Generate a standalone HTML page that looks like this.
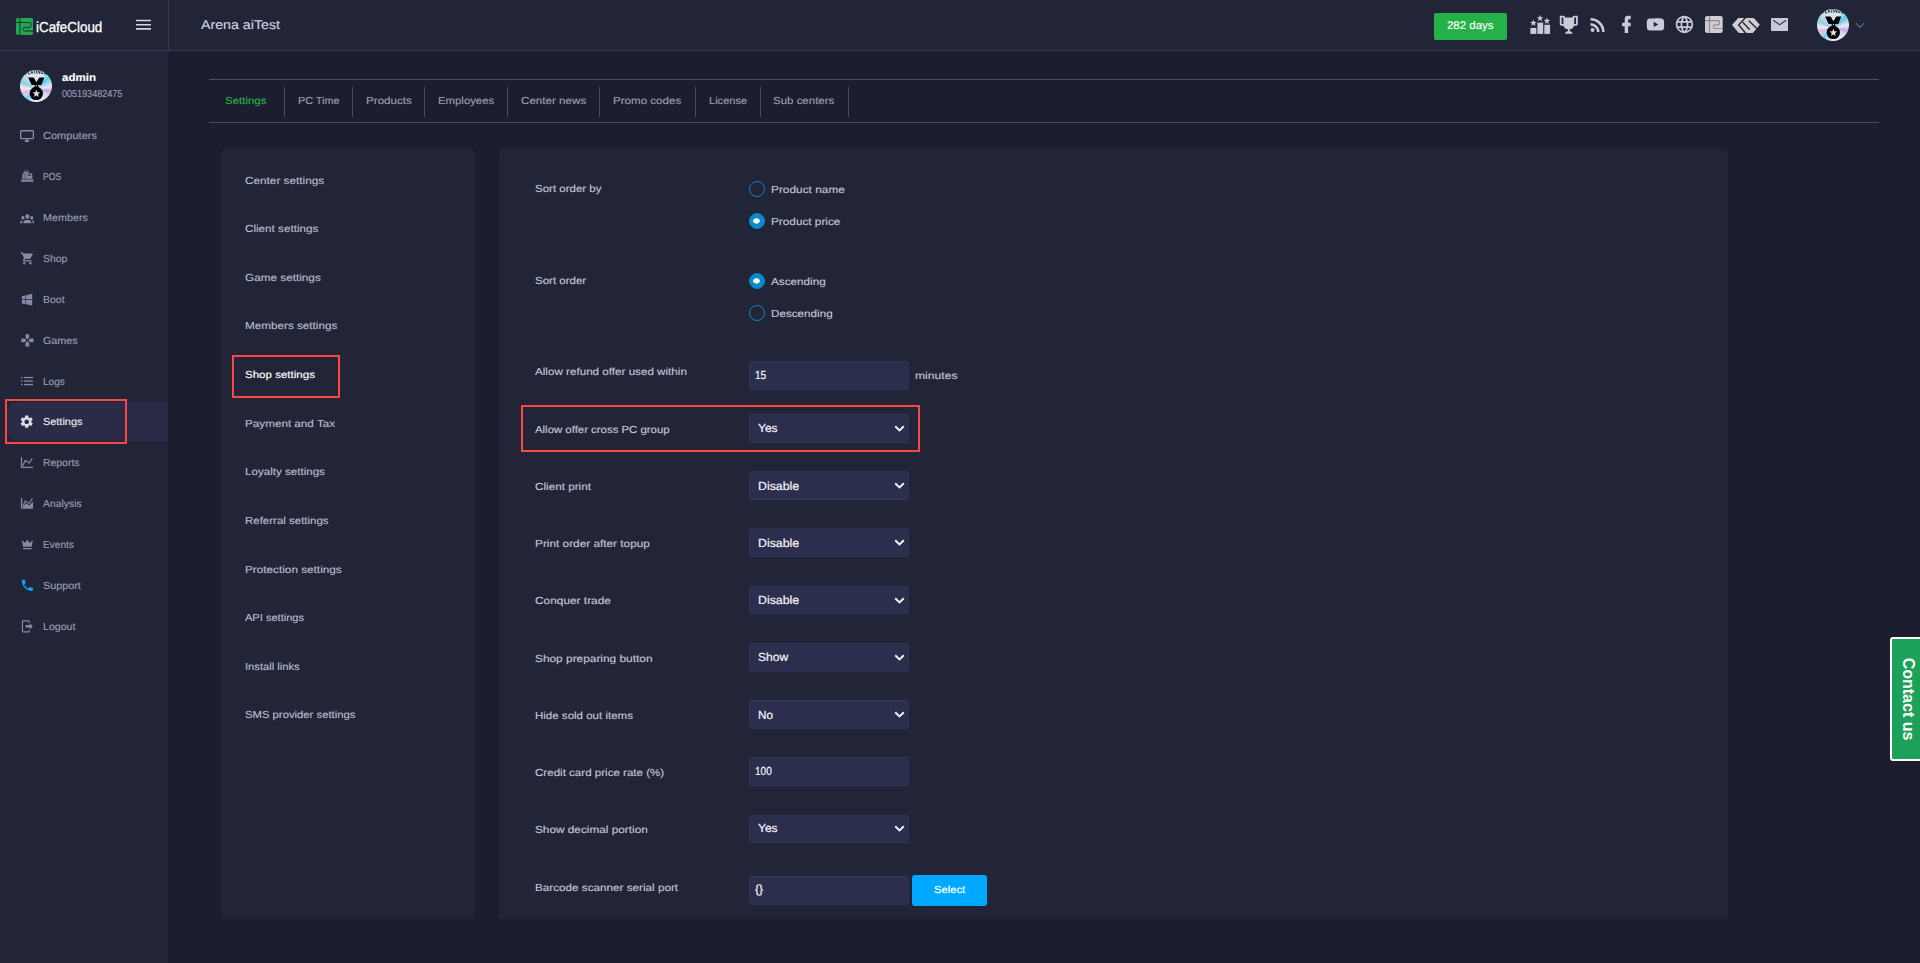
<!DOCTYPE html>
<html lang="en">
<head>
<meta charset="utf-8">
<title>iCafeCloud - Shop settings</title>
<style>
html,body{margin:0;padding:0}
body{width:1920px;height:963px;overflow:hidden;background:#1c1d2f;font-family:"Liberation Sans",Arial,sans-serif;position:relative}
*{box-sizing:border-box}
ul{list-style:none;margin:0;padding:0}
a{text-decoration:none;color:inherit}
.abs{position:absolute}
.t{position:absolute;display:inline-block;line-height:20px;white-space:pre;transform-origin:0 50%;text-rendering:geometricPrecision}
header{position:absolute;left:0;top:0;width:1920px;height:51px;background:#222437;border-bottom:1px solid #383a5c}
aside{position:absolute;left:0;top:51px;width:168px;height:912px;background:#222437}
.vline{position:absolute;left:168px;top:0;width:1px;height:50px;background:#383a5c}
.card{position:absolute;background:#222437;border-radius:5px}
.hl{position:absolute;border:2px solid #fb4643}
.tline{position:absolute;left:209px;width:1670px;height:1px;background:#4a4c66}
.sep{position:absolute;top:87px;width:1px;height:30px;background:#4a4c66}
.ctl{position:absolute;left:749px;width:160px;height:28.7px;background:#2c2e4e;border:1px solid #313357;border-radius:2.5px;color:#f4f4f8;font-size:11.7px;-webkit-text-stroke:0.2px #f4f4f8}
.fi{position:absolute;top:-0.5px;width:130px;height:28.7px;line-height:28.7px;margin:0;padding:0;border:0;outline:0;background:transparent;-webkit-appearance:none;appearance:none;color:inherit;font:inherit;-webkit-text-stroke:inherit;white-space:pre;display:block;transform-origin:0 50%;text-rendering:geometricPrecision}
.ctl svg{position:absolute;right:3.4px;top:10.1px}
.radio{position:absolute;left:749px;width:16px;height:16px;margin:0;padding:0;-webkit-appearance:none;appearance:none;outline:0;border-radius:50%;border:1px solid #0a89cd;background:transparent}
.radio:checked{background:#0a89cd radial-gradient(ellipse 3.75px 3.0px at 6.45px 6.95px,#fff 0,#fff 78%,rgba(255,255,255,0) 100%)}
.btn{position:absolute;border-radius:2px;border:0;padding:0;margin:0;font:inherit;text-align:left;display:block}
.contact{position:absolute;left:1890px;top:637px;width:34px;height:124px;background:#1da158;border:2px solid #fff;border-radius:3px}
.contact span{position:absolute;left:-46px;top:50.2px;width:124px;text-align:center;font-weight:700;font-size:16px;line-height:20px;color:#fff;transform:rotate(90deg);white-space:pre}
.lg{-webkit-text-stroke:0.3px #fff}
</style>
</head>
<body>

<header>
<div class="vline"></div>
<svg class="abs" style="left:16px;top:18px" width="17.2" height="17" viewBox="0 0 17.2 17">
<rect width="17.2" height="17" rx="2" fill="#22a652"/>
<path d="M3.9 0V17M0 4.5H13.3Q15.2 4.5 15.2 6.3V7.6Q15.2 9.4 13.3 9.4H8.6Q7.2 9.4 7.2 10.7V11.7Q7.2 13 8.6 13H17.2" fill="none" stroke="#1c3038" stroke-width="1"/>
</svg><svg class="abs" style="left:136.2px;top:19px" width="15" height="11" viewBox="0 0 15 11"><path fill="#d4d5e2" d="M0 0.7H15V2.25H0ZM0 4.9H15V6.45H0ZM0 9.1H15V10.65H0Z"/></svg>
<span class="t" style="left:35.6px;top:17.80px;font-size:14.5px;color:#ffffff;transform:scaleX(0.9240);-webkit-text-stroke:0.3px #ffffff;">iCafeCloud</span>
<span class="t" style="left:201px;top:14.80px;font-size:12.8px;color:#d0d2e1;transform:scaleX(1.1105);-webkit-text-stroke:0.15px #d0d2e1;">Arena aiTest</span>
<div class="btn" style="left:1434px;top:13px;width:73px;height:27px;background:#23b148"></div>
<span class="t" style="left:1447px;top:15.50px;font-size:11px;color:#ffffff;transform:scaleX(1.0413);-webkit-text-stroke:0.15px #ffffff;">282 days</span>
<svg class="abs" style="left:1529.6px;top:15.1px" width="21" height="19" viewBox="0 0 21 19"><g fill="#c9cbdb"><rect x="0.4" y="12.9" width="6" height="6"/><rect x="7.4" y="7.6" width="5.8" height="11.3"/><rect x="14.3" y="9.8" width="5.8" height="9.1"/><polygon points="3.40,4.40 4.25,6.83 6.82,6.89 4.78,8.45 5.52,10.91 3.40,9.45 1.28,10.91 2.02,8.45 -0.02,6.89 2.55,6.83"/><polygon points="10.10,-0.30 10.95,2.13 13.52,2.19 11.48,3.75 12.22,6.21 10.10,4.75 7.98,6.21 8.72,3.75 6.68,2.19 9.25,2.13"/><polygon points="16.90,2.40 17.75,4.83 20.32,4.89 18.28,6.45 19.02,8.91 16.90,7.45 14.78,8.91 15.52,6.45 13.48,4.89 16.05,4.83"/></g></svg><svg class="abs" style="left:1558.20px;top:14.00px" width="21.6" height="21.6" viewBox="0 0 24 24"><path fill="#c9cbdb" d="M20.2,2H19.5H18C17.1,2 16,3 16,4H8C8,3 6.9,2 6,2H4.5H3.8H2V11C2,12 3,13 4,13H6.2C6.6,15 7.9,16.7 11,17V19.1C8.8,19.3 8,20.4 8,21.7V22H16V21.7C16,20.4 15.2,19.3 13,19.1V17C16.1,16.7 17.4,15 17.8,13H20C21,13 22,12 22,11V2H20.2M4,11V4H6V6V11C5.1,11 4.3,11 4,11M20,11C19.7,11 18.9,11 18,11V6V4H20V11Z"/></svg><svg class="abs" style="left:1586.90px;top:14.00px" width="21.6" height="21.6" viewBox="0 0 24 24"><path fill="#c9cbdb" d="M6.18,15.64A2.18,2.18 0 0,1 8.36,17.82C8.36,19 7.38,20 6.18,20C5,20 4,19 4,17.82A2.18,2.18 0 0,1 6.18,15.64M4,4.44A15.56,15.56 0 0,1 19.56,20H16.73A12.73,12.73 0 0,0 4,7.27V4.44M4,10.1A9.9,9.9 0 0,1 13.9,20H11.07A7.07,7.07 0 0,0 4,12.93V10.1Z"/></svg><svg class="abs" style="left:1616.10px;top:14.00px" width="20.8" height="20.8" viewBox="0 0 24 24"><path fill="#c9cbdb" d="M17,2V2H17V6H15C14.31,6 14,6.81 14,7.5V10H14L17,10V14H14V22H10V14H7V10H10V6A4,4 0 0,1 14,2H17Z"/></svg><svg class="abs" style="left:1645.05px;top:14.05px" width="20.9" height="20.9" viewBox="0 0 24 24"><path fill="#c9cbdb" d="M10,15L15.19,12L10,9V15M21.56,7.17C21.69,7.64 21.78,8.27 21.84,9.07C21.91,9.87 21.94,10.56 21.94,11.16L22,12C22,14.19 21.84,15.8 21.56,16.83C21.31,17.73 20.73,18.31 19.83,18.56C19.36,18.69 18.5,18.78 17.18,18.84C15.88,18.91 14.69,18.94 13.59,18.94L12,19C7.81,19 5.2,18.84 4.17,18.56C3.27,18.31 2.69,17.73 2.44,16.83C2.31,16.36 2.22,15.73 2.16,14.93C2.09,14.13 2.06,13.44 2.06,12.84L2,12C2,9.81 2.16,8.2 2.44,7.17C2.69,6.27 3.27,5.69 4.17,5.44C4.64,5.31 5.5,5.22 6.82,5.16C8.12,5.09 9.31,5.06 10.41,5.06L12,5C16.19,5 18.8,5.16 19.83,5.44C20.73,5.69 21.31,6.27 21.56,7.17Z"/></svg><svg class="abs" style="left:1674.05px;top:14.10px" width="20.9" height="20.9" viewBox="0 0 24 24"><path fill="#c9cbdb" d="M16.36,14C16.44,13.34 16.5,12.68 16.5,12C16.5,11.32 16.44,10.66 16.36,10H19.74C19.9,10.64 20,11.31 20,12C20,12.69 19.9,13.36 19.74,14M14.59,19.56C15.19,18.45 15.65,17.25 15.97,16H18.92C17.96,17.65 16.43,18.93 14.59,19.56M14.34,14H9.66C9.56,13.34 9.5,12.68 9.5,12C9.5,11.32 9.56,10.65 9.66,10H14.34C14.43,10.65 14.5,11.32 14.5,12C14.5,12.68 14.43,13.34 14.34,14M12,19.96C11.17,18.76 10.5,17.43 10.09,16H13.91C13.5,17.43 12.83,18.76 12,19.96M8,8H5.08C6.03,6.34 7.57,5.06 9.4,4.44C8.8,5.55 8.35,6.75 8,8M5.08,16H8C8.35,17.25 8.8,18.45 9.4,19.56C7.57,18.93 6.03,17.65 5.08,16M4.26,14C4.1,13.36 4,12.69 4,12C4,11.31 4.1,10.64 4.26,10H7.64C7.56,10.66 7.5,11.32 7.5,12C7.5,12.68 7.56,13.34 7.64,14M12,4.03C12.83,5.23 13.5,6.57 13.91,8H10.09C10.5,6.57 11.17,5.23 12,4.03M18.92,8H15.97C15.65,6.75 15.19,5.55 14.59,4.44C16.43,5.07 17.96,6.34 18.92,8M12,2C6.47,2 2,6.5 2,12A10,10 0 0,0 12,22A10,10 0 0,0 22,12A10,10 0 0,0 12,2Z"/></svg><svg class="abs" style="left:1705.3px;top:16.2px" width="17.7" height="17" viewBox="0 0 17.7 17">
<rect width="17.7" height="17" rx="2.2" fill="#cfcfd1"/>
<path d="M4.5 0V17M0 4.6H13.2Q14.5 4.6 14.5 5.9V7.5Q14.5 8.8 13.2 8.8H9.8Q8.4 8.8 8.4 10.1V11.2Q8.4 12.5 9.8 12.5H17.7" fill="none" stroke="#8a8c9d" stroke-width="1.2"/></svg><svg class="abs" style="left:1732.2px;top:18px" width="27.8" height="15" viewBox="0 0 27.8 15">
<path fill="#cfcfd1" d="M6.2 0H21.8L27.8 6.8L20.8 15H6.8L0 7Z"/>
<path d="M13.4 -0.3L6.6 7L13.8 15.3M10.8 4.3L17.8 11.7M16.8 2.7L24.8 10.6" fill="none" stroke="#23253a" stroke-width="1.35"/></svg><svg class="abs" style="left:1770.8px;top:17.8px" width="17.4" height="13.5" viewBox="0 0 17.4 13.5"><rect width="17.4" height="13.5" rx="1.3" fill="#c9cbdb"/><path d="M2.2 2.3L8.7 6.7L15.2 2.3" fill="none" stroke="#2a2c44" stroke-width="1.1"/></svg><div class="abs" style="left:1816.9px;top:8.9px;width:32.2px;height:32.2px;border-radius:50%;background:conic-gradient(from 0deg at 50% 60%,#d6e3ef 0deg,#dde9f2 25deg,#5cc9ea 48deg,#a8d8ec 62deg,#f3e6ee 80deg,#c9a6ef 97deg,#d5dcef 118deg,#e3ecf4 150deg,#eef2f7 180deg,#b5e3f1 208deg,#5fd5ee 224deg,#c3d3ea 240deg,#ddbbe9 256deg,#f6ebee 276deg,#8fcfe2 296deg,#b9dcea 318deg,#dbe6f0 340deg,#d6e3ef 360deg)"></div>
<svg class="abs" style="left:1816.9px;top:8.9px;will-change:transform" width="32.2" height="32.2" viewBox="0 0 32.2 32.2">
<defs><clipPath id="c1"><circle cx="16.1" cy="16.1" r="16.1"/></clipPath>
<path id="a1" d="M4 5.5 A40 40 0 0 1 28.4 5.5"/></defs>
<g clip-path="url(#c1)">
<text font-family="Liberation Sans,Arial,sans-serif" font-size="4.7" font-weight="700" fill="#000"><textPath href="#a1" startOffset="1.3" textLength="21.8" lengthAdjust="spacingAndGlyphs">PLATINUM</textPath></text>
<path fill="#000" d="M8.1 7.5H13.7L16.4 12.25L19.3 7.5H24.3L21.4 14.95H18.2V17.6H14.6V14.95H11.6Z"/>
<rect x="15.8" y="15.1" width="1.2" height="1.2" fill="#cfd6e6"/>
<circle cx="16.3" cy="23.4" r="6.7" fill="#000"/>
<polygon fill="#dcdce8" points="16.40,19.70 17.46,22.24 20.20,22.46 18.11,24.26 18.75,26.94 16.40,25.50 14.05,26.94 14.69,24.26 12.60,22.46 15.34,22.24"/>
</g></svg><svg class="abs" style="left:1854.5px;top:22px" width="10" height="7" viewBox="0 0 10 7"><path d="M0.8 1L5 5.4L9.2 1" fill="none" stroke="#6470a6" stroke-width="1.05"/></svg>
</header>
<aside></aside>
<nav>
<div class="abs" style="left:19.9px;top:69.9px;width:32.2px;height:32.2px;border-radius:50%;background:conic-gradient(from 0deg at 50% 60%,#d6e3ef 0deg,#dde9f2 25deg,#5cc9ea 48deg,#a8d8ec 62deg,#f3e6ee 80deg,#c9a6ef 97deg,#d5dcef 118deg,#e3ecf4 150deg,#eef2f7 180deg,#b5e3f1 208deg,#5fd5ee 224deg,#c3d3ea 240deg,#ddbbe9 256deg,#f6ebee 276deg,#8fcfe2 296deg,#b9dcea 318deg,#dbe6f0 340deg,#d6e3ef 360deg)"></div>
<svg class="abs" style="left:19.9px;top:69.9px;will-change:transform" width="32.2" height="32.2" viewBox="0 0 32.2 32.2">
<defs><clipPath id="c2"><circle cx="16.1" cy="16.1" r="16.1"/></clipPath>
<path id="a2" d="M4 5.5 A40 40 0 0 1 28.4 5.5"/></defs>
<g clip-path="url(#c2)">
<text font-family="Liberation Sans,Arial,sans-serif" font-size="4.7" font-weight="700" fill="#000"><textPath href="#a2" startOffset="1.3" textLength="21.8" lengthAdjust="spacingAndGlyphs">PLATINUM</textPath></text>
<path fill="#000" d="M8.1 7.5H13.7L16.4 12.25L19.3 7.5H24.3L21.4 14.95H18.2V17.6H14.6V14.95H11.6Z"/>
<rect x="15.8" y="15.1" width="1.2" height="1.2" fill="#cfd6e6"/>
<circle cx="16.3" cy="23.4" r="6.7" fill="#000"/>
<polygon fill="#dcdce8" points="16.40,19.70 17.46,22.24 20.20,22.46 18.11,24.26 18.75,26.94 16.40,25.50 14.05,26.94 14.69,24.26 12.60,22.46 15.34,22.24"/>
</g></svg>
<span class="t" style="left:61.5px;top:67.70px;font-size:10.8px;font-weight:700;color:#ffffff;transform:scaleX(1.0693);-webkit-text-stroke:0.15px #ffffff;">admin</span>
<span class="t" style="left:61.7px;top:85.20px;font-size:10.2px;color:#999cb6;transform:scaleX(0.8868);-webkit-text-stroke:0.15px #999cb6;">005193482475</span>
<div class="abs" style="left:6px;top:402px;width:162px;height:39px;background:#292b47;border-radius:13px 0 0 13px"></div>
<ul>
<li><a href="#"><svg class="abs" style="left:19.00px;top:129.00px" width="16" height="14" viewBox="0 0 16 14"><rect x="1.65" y="1.75" width="12.7" height="7.9" rx="0.7" fill="none" stroke="#878aa7" stroke-width="1.3"/><path d="M7.3 10.2H8.7L10.6 13H5.4Z" fill="#878aa7"/></svg><span class="t" style="left:42.5px;top:127.30px;font-size:10.2px;color:#999cb6;transform:scaleX(1.0837);-webkit-text-stroke:0.15px #999cb6;">Computers</span></a></li>
<li><a href="#"><svg class="abs" style="left:19.65px;top:168.73px" width="14.7" height="14.7" viewBox="0 0 24 24"><path fill="#878aa7" d="M2,17H22V21H2V17M6.25,7H9V6H6V3H14V6H11V7H17.8C18.8,7 19.8,8 20,9L20.5,16H3.5L4.05,9C4.05,8 5.05,7 6.25,7M13,9V11H18V9H13M6,9V10H8V9H6M9,9V10H11V9H9M6,11V12H8V11H6M9,11V12H11V11H9M6,13V14H8V13H6M9,13V14H11V13H9M7,4V5H13V4H7Z"/></svg><span class="t" style="left:42.5px;top:168.18px;font-size:10.2px;color:#999cb6;transform:scaleX(0.8552);-webkit-text-stroke:0.15px #999cb6;">POS</span></a></li>
<li><a href="#"><svg class="abs" style="left:19.65px;top:210.81px" width="14.7" height="14.7" viewBox="0 0 24 24"><path fill="#878aa7" d="M12,5.5A3.5,3.5 0 0,1 15.5,9A3.5,3.5 0 0,1 12,12.5A3.5,3.5 0 0,1 8.5,9A3.5,3.5 0 0,1 12,5.5M5,8C5.56,8 6.08,8.15 6.53,8.42C6.38,9.85 6.8,11.27 7.66,12.38C7.16,13.34 6.16,14 5,14A3,3 0 0,1 2,11A3,3 0 0,1 5,8M19,8A3,3 0 0,1 22,11A3,3 0 0,1 19,14C17.84,14 16.84,13.34 16.34,12.38C17.2,11.27 17.62,9.85 17.47,8.42C17.92,8.15 18.44,8 19,8M5.5,18.25C5.5,16.18 8.41,14.5 12,14.5C15.59,14.5 18.5,16.18 18.5,18.25V20H5.5V18.25M0,20V18.5C0,17.11 1.89,15.94 4.45,15.6C3.86,16.28 3.5,17.22 3.5,18.25V20H0M24,20H20.5V18.25C20.5,17.22 20.14,16.28 19.55,15.6C22.11,15.94 24,17.11 24,18.5V20Z"/></svg><span class="t" style="left:42.5px;top:209.06px;font-size:10.2px;color:#999cb6;transform:scaleX(1.0572);-webkit-text-stroke:0.15px #999cb6;">Members</span></a></li>
<li><a href="#"><svg class="abs" style="left:19.65px;top:251.29px" width="14.7" height="14.7" viewBox="0 0 24 24"><path fill="#878aa7" d="M17,18C15.89,18 15,18.89 15,20A2,2 0 0,0 17,22A2,2 0 0,0 19,20C19,18.89 18.1,18 17,18M1,2V4H3L6.6,11.59L5.24,14.04C5.09,14.32 5,14.65 5,15A2,2 0 0,0 7,17H19V15H7.42A0.25,0.25 0 0,1 7.17,14.75C7.17,14.7 7.18,14.66 7.2,14.63L8.1,13H15.55C16.3,13 16.96,12.58 17.3,11.97L20.88,5.5C20.95,5.34 21,5.17 21,5A1,1 0 0,0 20,4H5.21L4.27,2M7,18C5.89,18 5,18.89 5,20A2,2 0 0,0 7,22A2,2 0 0,0 9,20C9,18.89 8.1,18 7,18Z"/></svg><span class="t" style="left:42.5px;top:249.94px;font-size:10.2px;color:#999cb6;transform:scaleX(1.0253);-webkit-text-stroke:0.15px #999cb6;">Shop</span></a></li>
<li><a href="#"><svg class="abs" style="left:19.65px;top:292.17px" width="14.7" height="14.7" viewBox="0 0 24 24"><path fill="#878aa7" d="M3,12V6.75L9,5.43V11.91L3,12M20,3V11.75L10,11.9V5.21L20,3M3,13L9,13.09V19.9L3,18.75V13M20,13.25V22L10,20.09V13.1L20,13.25Z"/></svg><span class="t" style="left:42.5px;top:290.82px;font-size:10.2px;color:#999cb6;transform:scaleX(1.0301);-webkit-text-stroke:0.15px #999cb6;">Boot</span></a></li>
<li><a href="#"><svg class="abs" style="left:19.65px;top:333.05px" width="14.7" height="14.7" viewBox="0 0 24 24"><path fill="#878aa7" d="M15 7.5V2H9v5.5l3 3 3-3zM7.5 9H2v6h5.5l3-3-3-3zM9 16.5V22h6v-5.5l-3-3-3 3zM16.5 9l-3 3 3 3H22V9h-5.5z"/></svg><span class="t" style="left:42.5px;top:331.70px;font-size:10.2px;color:#999cb6;transform:scaleX(1.0565);-webkit-text-stroke:0.15px #999cb6;">Games</span></a></li>
<li><a href="#"><svg class="abs" style="left:20.00px;top:375.88px" width="14" height="10" viewBox="0 0 14 10"><g fill="#878aa7"><rect x="1" y="0.9" width="1.6" height="1.3"/><rect x="4" y="0.9" width="9" height="1.3"/><rect x="1" y="4.4" width="1.6" height="1.3"/><rect x="4" y="4.4" width="9" height="1.3"/><rect x="1" y="7.9" width="1.6" height="1.3"/><rect x="4" y="7.9" width="9" height="1.3"/></g></svg><span class="t" style="left:42.5px;top:372.58px;font-size:10.2px;color:#999cb6;transform:scaleX(0.9912);-webkit-text-stroke:0.15px #999cb6;">Logs</span></a></li>
<li><a href="#"><svg class="abs" style="left:19.30px;top:414.26px" width="15.4" height="15.4" viewBox="0 0 24 24"><path fill="#dcdde8" d="M19.14,12.94c0.04-0.3,0.06-0.61,0.06-0.94c0-0.32-0.02-0.64-0.07-0.94l2.03-1.58c0.18-0.14,0.23-0.41,0.12-0.61 l-1.92-3.32c-0.12-0.22-0.37-0.29-0.59-0.22l-2.39,0.96c-0.5-0.38-1.03-0.7-1.62-0.94L14.4,2.81c-0.04-0.24-0.24-0.41-0.48-0.41 h-3.84c-0.24,0-0.43,0.17-0.47,0.41L9.25,5.35C8.66,5.59,8.12,5.92,7.63,6.29L5.24,5.33c-0.22-0.08-0.47,0-0.59,0.22L2.74,8.87 C2.62,9.08,2.66,9.34,2.86,9.48l2.03,1.58C4.84,11.36,4.8,11.69,4.8,12s0.02,0.64,0.07,0.94l-2.03,1.58 c-0.18,0.14-0.23,0.41-0.12,0.61l1.92,3.32c0.12,0.22,0.37,0.29,0.59,0.22l2.39-0.96c0.5,0.38,1.03,0.7,1.62,0.94l0.36,2.54 c0.05,0.24,0.24,0.41,0.48,0.41h3.84c0.24,0,0.44-0.17,0.47-0.41l0.36-2.54c0.59-0.24,1.13-0.56,1.62-0.94l2.39,0.96 c0.22,0.08,0.47,0,0.59-0.22l1.92-3.32c0.12-0.22,0.07-0.47-0.12-0.61L19.14,12.94z M12,15.6c-1.98,0-3.6-1.62-3.6-3.6 s1.62-3.6,3.6-3.6s3.6,1.62,3.6,3.6S13.98,15.6,12,15.6z"/></svg><span class="t" style="left:42.5px;top:413.46px;font-size:10.2px;color:#e9eaf2;transform:scaleX(1.0703);-webkit-text-stroke:0.15px #e9eaf2;">Settings</span></a></li>
<li><a href="#"><svg class="abs" style="left:20.00px;top:456.04px" width="14" height="14" viewBox="0 0 14 14"><path d="M1.5 1V11.4H13" fill="none" stroke="#878aa7" stroke-width="1.25"/><path d="M2.6 10.2L5.2 4.4L9.2 6.9L12.4 2.2" fill="none" stroke="#878aa7" stroke-width="1.15"/></svg><span class="t" style="left:42.5px;top:454.34px;font-size:10.2px;color:#999cb6;transform:scaleX(1.0232);-webkit-text-stroke:0.15px #999cb6;">Reports</span></a></li>
<li><a href="#"><svg class="abs" style="left:20.00px;top:496.92px" width="14" height="14" viewBox="0 0 14 14"><path d="M0.9 1H2.2V11.8H0.9Z" fill="#878aa7"/><path d="M2.6 9.9L5.2 4.0L9.2 6.5L12.4 1.5" fill="none" stroke="#878aa7" stroke-width="1.15"/><path d="M2.2 11.8L5.6 6.2L9.4 8.5L13 4.4V11.8Z" fill="#878aa7"/></svg><span class="t" style="left:42.5px;top:495.22px;font-size:10.2px;color:#999cb6;transform:scaleX(1.0201);-webkit-text-stroke:0.15px #999cb6;">Analysis</span></a></li>
<li><a href="#"><svg class="abs" style="left:19.65px;top:537.45px" width="14.7" height="14.7" viewBox="0 0 24 24"><path fill="#878aa7" d="M5 16L3 5L8.5 10L12 4L15.5 10L21 5L19 16H5M19 19C19 19.6 18.6 20 18 20H6C5.4 20 5 19.6 5 19V18H19V19Z"/></svg><span class="t" style="left:42.5px;top:536.10px;font-size:10.2px;color:#999cb6;transform:scaleX(0.9918);-webkit-text-stroke:0.15px #999cb6;">Events</span></a></li>
<li><a href="#"><svg class="abs" style="left:19.65px;top:578.33px" width="14.7" height="14.7" viewBox="0 0 24 24"><path fill="#00aaff" d="M6.62 10.79c1.44 2.83 3.76 5.14 6.59 6.59l2.2-2.2c.27-.27.67-.36 1.02-.24 1.12.37 2.33.57 3.57.57.55 0 1 .45 1 1V20c0 .55-.45 1-1 1-9.39 0-17-7.61-17-17 0-.55.45-1 1-1h3.5c.55 0 1 .45 1 1 0 1.25.2 2.45.57 3.57.11.35.03.74-.25 1.02l-2.2 2.2z"/></svg><span class="t" style="left:42.5px;top:576.98px;font-size:10.2px;color:#999cb6;transform:scaleX(1.0592);-webkit-text-stroke:0.15px #999cb6;">Support</span></a></li>
<li><a href="#"><svg class="abs" style="left:19.65px;top:619.21px" width="14.7" height="14.7" viewBox="0 0 24 24"><path fill="#878aa7" d="M16,17V14H9V10H16V7L21,12L16,17M14,2A2,2 0 0,1 16,4V6H14V4H5V20H14V18H16V20A2,2 0 0,1 14,22H5A2,2 0 0,1 3,20V4A2,2 0 0,1 5,2H14Z"/></svg><span class="t" style="left:42.5px;top:617.86px;font-size:10.2px;color:#999cb6;transform:scaleX(1.0394);-webkit-text-stroke:0.15px #999cb6;">Logout</span></a></li>
</ul>
<div class="hl" style="left:5px;top:399px;width:122px;height:45px"></div>
</nav>
<main>
<div class="tline" style="top:79px"></div><div class="tline" style="top:122px"></div>
<ul>
<li><a href="#"><span class="t" style="left:225px;top:92.35px;font-size:10.2px;color:#23b148;transform:scaleX(1.1246);-webkit-text-stroke:0.15px #23b148;">Settings</span></a></li>
<li><a href="#"><span class="t" style="left:297.5px;top:92.35px;font-size:10.2px;color:#9a9cb4;transform:scaleX(1.0624);-webkit-text-stroke:0.15px #9a9cb4;">PC Time</span></a></li>
<li><a href="#"><span class="t" style="left:365.6px;top:92.35px;font-size:10.2px;color:#9a9cb4;transform:scaleX(1.1417);-webkit-text-stroke:0.15px #9a9cb4;">Products</span></a></li>
<li><a href="#"><span class="t" style="left:438.3px;top:92.35px;font-size:10.2px;color:#9a9cb4;transform:scaleX(1.1149);-webkit-text-stroke:0.15px #9a9cb4;">Employees</span></a></li>
<li><a href="#"><span class="t" style="left:521.4px;top:92.35px;font-size:10.2px;color:#9a9cb4;transform:scaleX(1.1398);-webkit-text-stroke:0.15px #9a9cb4;">Center news</span></a></li>
<li><a href="#"><span class="t" style="left:613.3px;top:92.35px;font-size:10.2px;color:#9a9cb4;transform:scaleX(1.1361);-webkit-text-stroke:0.15px #9a9cb4;">Promo codes</span></a></li>
<li><a href="#"><span class="t" style="left:708.5px;top:92.35px;font-size:10.2px;color:#9a9cb4;transform:scaleX(1.0847);-webkit-text-stroke:0.15px #9a9cb4;">License</span></a></li>
<li><a href="#"><span class="t" style="left:773.4px;top:92.35px;font-size:10.2px;color:#9a9cb4;transform:scaleX(1.1274);-webkit-text-stroke:0.15px #9a9cb4;">Sub centers</span></a></li>
</ul>
<div class="sep" style="left:284.1px"></div>
<div class="sep" style="left:351.9px"></div>
<div class="sep" style="left:423.9px"></div>
<div class="sep" style="left:507.0px"></div>
<div class="sep" style="left:599.1px"></div>
<div class="sep" style="left:694.9px"></div>
<div class="sep" style="left:759.9px"></div>
<div class="sep" style="left:847.9px"></div>
<div class="card" style="left:221px;top:149px;width:254px;height:770px"></div>
<div class="card" style="left:499px;top:149px;width:1229px;height:770px;border-radius:5px 5px 0 0"></div>
<ul>
<li><a href="#"><span class="t" style="left:244.8px;top:171.55px;font-size:10.2px;color:#b9bbcd;transform:scaleX(1.1557);-webkit-text-stroke:0.15px #b9bbcd;">Center settings</span></a></li>
<li><a href="#"><span class="t" style="left:244.8px;top:220.18px;font-size:10.2px;color:#b9bbcd;transform:scaleX(1.1453);-webkit-text-stroke:0.15px #b9bbcd;">Client settings</span></a></li>
<li><a href="#"><span class="t" style="left:244.8px;top:268.81px;font-size:10.2px;color:#b9bbcd;transform:scaleX(1.1539);-webkit-text-stroke:0.15px #b9bbcd;">Game settings</span></a></li>
<li><a href="#"><span class="t" style="left:244.8px;top:317.44px;font-size:10.2px;color:#b9bbcd;transform:scaleX(1.1479);-webkit-text-stroke:0.15px #b9bbcd;">Members settings</span></a></li>
<li><a href="#"><span class="t" style="left:244.8px;top:366.07px;font-size:10.2px;color:#ffffff;transform:scaleX(1.1323);-webkit-text-stroke:0.15px #ffffff;">Shop settings</span></a></li>
<li><a href="#"><span class="t" style="left:244.8px;top:414.70px;font-size:10.2px;color:#b9bbcd;transform:scaleX(1.1473);-webkit-text-stroke:0.15px #b9bbcd;">Payment and Tax</span></a></li>
<li><a href="#"><span class="t" style="left:244.8px;top:463.33px;font-size:10.2px;color:#b9bbcd;transform:scaleX(1.1379);-webkit-text-stroke:0.15px #b9bbcd;">Loyalty settings</span></a></li>
<li><a href="#"><span class="t" style="left:244.8px;top:511.96px;font-size:10.2px;color:#b9bbcd;transform:scaleX(1.1269);-webkit-text-stroke:0.15px #b9bbcd;">Referral settings</span></a></li>
<li><a href="#"><span class="t" style="left:244.8px;top:560.59px;font-size:10.2px;color:#b9bbcd;transform:scaleX(1.1538);-webkit-text-stroke:0.15px #b9bbcd;">Protection settings</span></a></li>
<li><a href="#"><span class="t" style="left:244.8px;top:609.22px;font-size:10.2px;color:#b9bbcd;transform:scaleX(1.0851);-webkit-text-stroke:0.15px #b9bbcd;">API settings</span></a></li>
<li><a href="#"><span class="t" style="left:244.8px;top:657.85px;font-size:10.2px;color:#b9bbcd;transform:scaleX(1.0958);-webkit-text-stroke:0.15px #b9bbcd;">Install links</span></a></li>
<li><a href="#"><span class="t" style="left:244.8px;top:706.48px;font-size:10.2px;color:#b9bbcd;transform:scaleX(1.1078);-webkit-text-stroke:0.15px #b9bbcd;">SMS provider settings</span></a></li>
</ul>
<div class="hl" style="left:232px;top:355px;width:108.2px;height:43px"></div>
<form>
<label class="t" style="left:535.3px;top:180.30px;font-size:10.2px;color:#c2c4d4;transform:scaleX(1.1292);-webkit-text-stroke:0.15px #c2c4d4;">Sort order by</label>
<label class="t" style="left:535.3px;top:272.30px;font-size:10.2px;color:#c2c4d4;transform:scaleX(1.1281);-webkit-text-stroke:0.15px #c2c4d4;">Sort order</label>
<label class="t" style="left:535.3px;top:363.30px;font-size:10.2px;color:#c2c4d4;transform:scaleX(1.1430);-webkit-text-stroke:0.15px #c2c4d4;">Allow refund offer used within</label>
<label class="t" style="left:535.3px;top:421.30px;font-size:10.2px;color:#c2c4d4;transform:scaleX(1.1177);-webkit-text-stroke:0.15px #c2c4d4;">Allow offer cross PC group</label>
<label class="t" style="left:535.3px;top:478.30px;font-size:10.2px;color:#c2c4d4;transform:scaleX(1.1498);-webkit-text-stroke:0.15px #c2c4d4;">Client print</label>
<label class="t" style="left:535.3px;top:535.30px;font-size:10.2px;color:#c2c4d4;transform:scaleX(1.1593);-webkit-text-stroke:0.15px #c2c4d4;">Print order after topup</label>
<label class="t" style="left:535.3px;top:592.30px;font-size:10.2px;color:#c2c4d4;transform:scaleX(1.1652);-webkit-text-stroke:0.15px #c2c4d4;">Conquer trade</label>
<label class="t" style="left:535.3px;top:649.80px;font-size:10.2px;color:#c2c4d4;transform:scaleX(1.1653);-webkit-text-stroke:0.15px #c2c4d4;">Shop preparing button</label>
<label class="t" style="left:535.3px;top:706.80px;font-size:10.2px;color:#c2c4d4;transform:scaleX(1.1300);-webkit-text-stroke:0.15px #c2c4d4;">Hide sold out items</label>
<label class="t" style="left:535.3px;top:763.80px;font-size:10.2px;color:#c2c4d4;transform:scaleX(1.1354);-webkit-text-stroke:0.15px #c2c4d4;">Credit card price rate (%)</label>
<label class="t" style="left:535.3px;top:821.30px;font-size:10.2px;color:#c2c4d4;transform:scaleX(1.1580);-webkit-text-stroke:0.15px #c2c4d4;">Show decimal portion</label>
<label class="t" style="left:535.3px;top:878.80px;font-size:10.2px;color:#c2c4d4;transform:scaleX(1.1487);-webkit-text-stroke:0.15px #c2c4d4;">Barcode scanner serial port</label>
<input type="radio" class="radio" name="sort_by" style="top:181px">
<span class="t" style="left:770.9px;top:181.40px;font-size:10.2px;color:#c2c4d4;transform:scaleX(1.1649);-webkit-text-stroke:0.15px #c2c4d4;">Product name</span>
<input type="radio" class="radio" name="sort_by" style="top:213px" checked>
<span class="t" style="left:770.9px;top:213.40px;font-size:10.2px;color:#c2c4d4;transform:scaleX(1.1561);-webkit-text-stroke:0.15px #c2c4d4;">Product price</span>
<input type="radio" class="radio" name="sort_order" style="top:273px" checked>
<span class="t" style="left:770.9px;top:273.40px;font-size:10.2px;color:#c2c4d4;transform:scaleX(1.1497);-webkit-text-stroke:0.15px #c2c4d4;">Ascending</span>
<input type="radio" class="radio" name="sort_order" style="top:305px">
<span class="t" style="left:770.9px;top:305.40px;font-size:10.2px;color:#c2c4d4;transform:scaleX(1.1466);-webkit-text-stroke:0.15px #c2c4d4;">Descending</span>
<span class="t" style="left:914.8px;top:366.90px;font-size:10.2px;color:#c2c4d4;transform:scaleX(1.1914);-webkit-text-stroke:0.15px #c2c4d4;">minutes</span>
<div class="ctl" style="top:361px;height:29px"><input class="fi" type="text" value="15" style="left:4.8px;top:-1.50px;height:29px;line-height:29px;transform:scaleX(0.860)"></div>
<div class="ctl" style="top:414px;height:29px"><select class="fi" style="left:7.7px;top:-1.50px;height:29px;line-height:29px;transform:scaleX(1.027)"><option selected>Yes</option><option>No</option></select><svg style="top:10.10px" width="11" height="7" viewBox="0 0 11 7"><path d="M1.2 1.2L5.5 5.4L9.8 1.2" fill="none" stroke="#f2f2f6" stroke-width="2"/></svg></div>
<div class="ctl" style="top:471px;height:29px"><select class="fi" style="left:7.7px;top:-0.50px;height:29px;line-height:29px;transform:scaleX(1.057)"><option selected>Disable</option><option>Enable</option></select><svg style="top:10.10px" width="11" height="7" viewBox="0 0 11 7"><path d="M1.2 1.2L5.5 5.4L9.8 1.2" fill="none" stroke="#f2f2f6" stroke-width="2"/></svg></div>
<div class="ctl" style="top:528px;height:28.5px"><select class="fi" style="left:7.7px;top:0.60px;height:28.5px;line-height:28.5px;transform:scaleX(1.057)"><option selected>Disable</option><option>Enable</option></select><svg style="top:9.85px" width="11" height="7" viewBox="0 0 11 7"><path d="M1.2 1.2L5.5 5.4L9.8 1.2" fill="none" stroke="#f2f2f6" stroke-width="2"/></svg></div>
<div class="ctl" style="top:586px;height:28px"><select class="fi" style="left:7.7px;top:-0.50px;height:28px;line-height:28px;transform:scaleX(1.057)"><option selected>Disable</option><option>Enable</option></select><svg style="top:9.60px" width="11" height="7" viewBox="0 0 11 7"><path d="M1.2 1.2L5.5 5.4L9.8 1.2" fill="none" stroke="#f2f2f6" stroke-width="2"/></svg></div>
<div class="ctl" style="top:643px;height:28.5px"><select class="fi" style="left:7.7px;top:-0.50px;height:28.5px;line-height:28.5px;transform:scaleX(1.032)"><option selected>Show</option><option>Hide</option></select><svg style="top:9.85px" width="11" height="7" viewBox="0 0 11 7"><path d="M1.2 1.2L5.5 5.4L9.8 1.2" fill="none" stroke="#f2f2f6" stroke-width="2"/></svg></div>
<div class="ctl" style="top:700px;height:29px"><select class="fi" style="left:7.7px;top:-0.50px;height:29px;line-height:29px;transform:scaleX(1.003)"><option selected>No</option><option>Yes</option></select><svg style="top:10.10px" width="11" height="7" viewBox="0 0 11 7"><path d="M1.2 1.2L5.5 5.4L9.8 1.2" fill="none" stroke="#f2f2f6" stroke-width="2"/></svg></div>
<div class="ctl" style="top:757px;height:28.6px"><input class="fi" type="text" value="100" style="left:4.8px;top:-1.25px;height:28.6px;line-height:28.6px;transform:scaleX(0.860)"></div>
<div class="ctl" style="top:815px;height:27.5px"><select class="fi" style="left:7.7px;top:-1.50px;height:27.5px;line-height:27.5px;transform:scaleX(1.027)"><option selected>Yes</option><option>No</option></select><svg style="top:9.35px" width="11" height="7" viewBox="0 0 11 7"><path d="M1.2 1.2L5.5 5.4L9.8 1.2" fill="none" stroke="#f2f2f6" stroke-width="2"/></svg></div>
<div class="ctl" style="top:876px;height:29px"><input class="fi" type="text" value="{}" style="left:4.8px;top:-2.50px;height:29px;line-height:29px;transform:scaleX(1.050)"></div>
<button type="button" class="btn" style="left:912px;top:875px;width:75.2px;height:31px;border-radius:3px;background:#00a9ff"><span class="t" style="left:21.799999999999955px;top:5.60px;font-size:10.2px;color:#ffffff;transform:scaleX(1.1014);-webkit-text-stroke:0.2px #ffffff;">Select</span></button>
<div class="hl" style="left:521px;top:405px;width:399px;height:47px"></div>
</form>
</main>
<div class="contact"><span>Contact us</span></div>
</body>
</html>
